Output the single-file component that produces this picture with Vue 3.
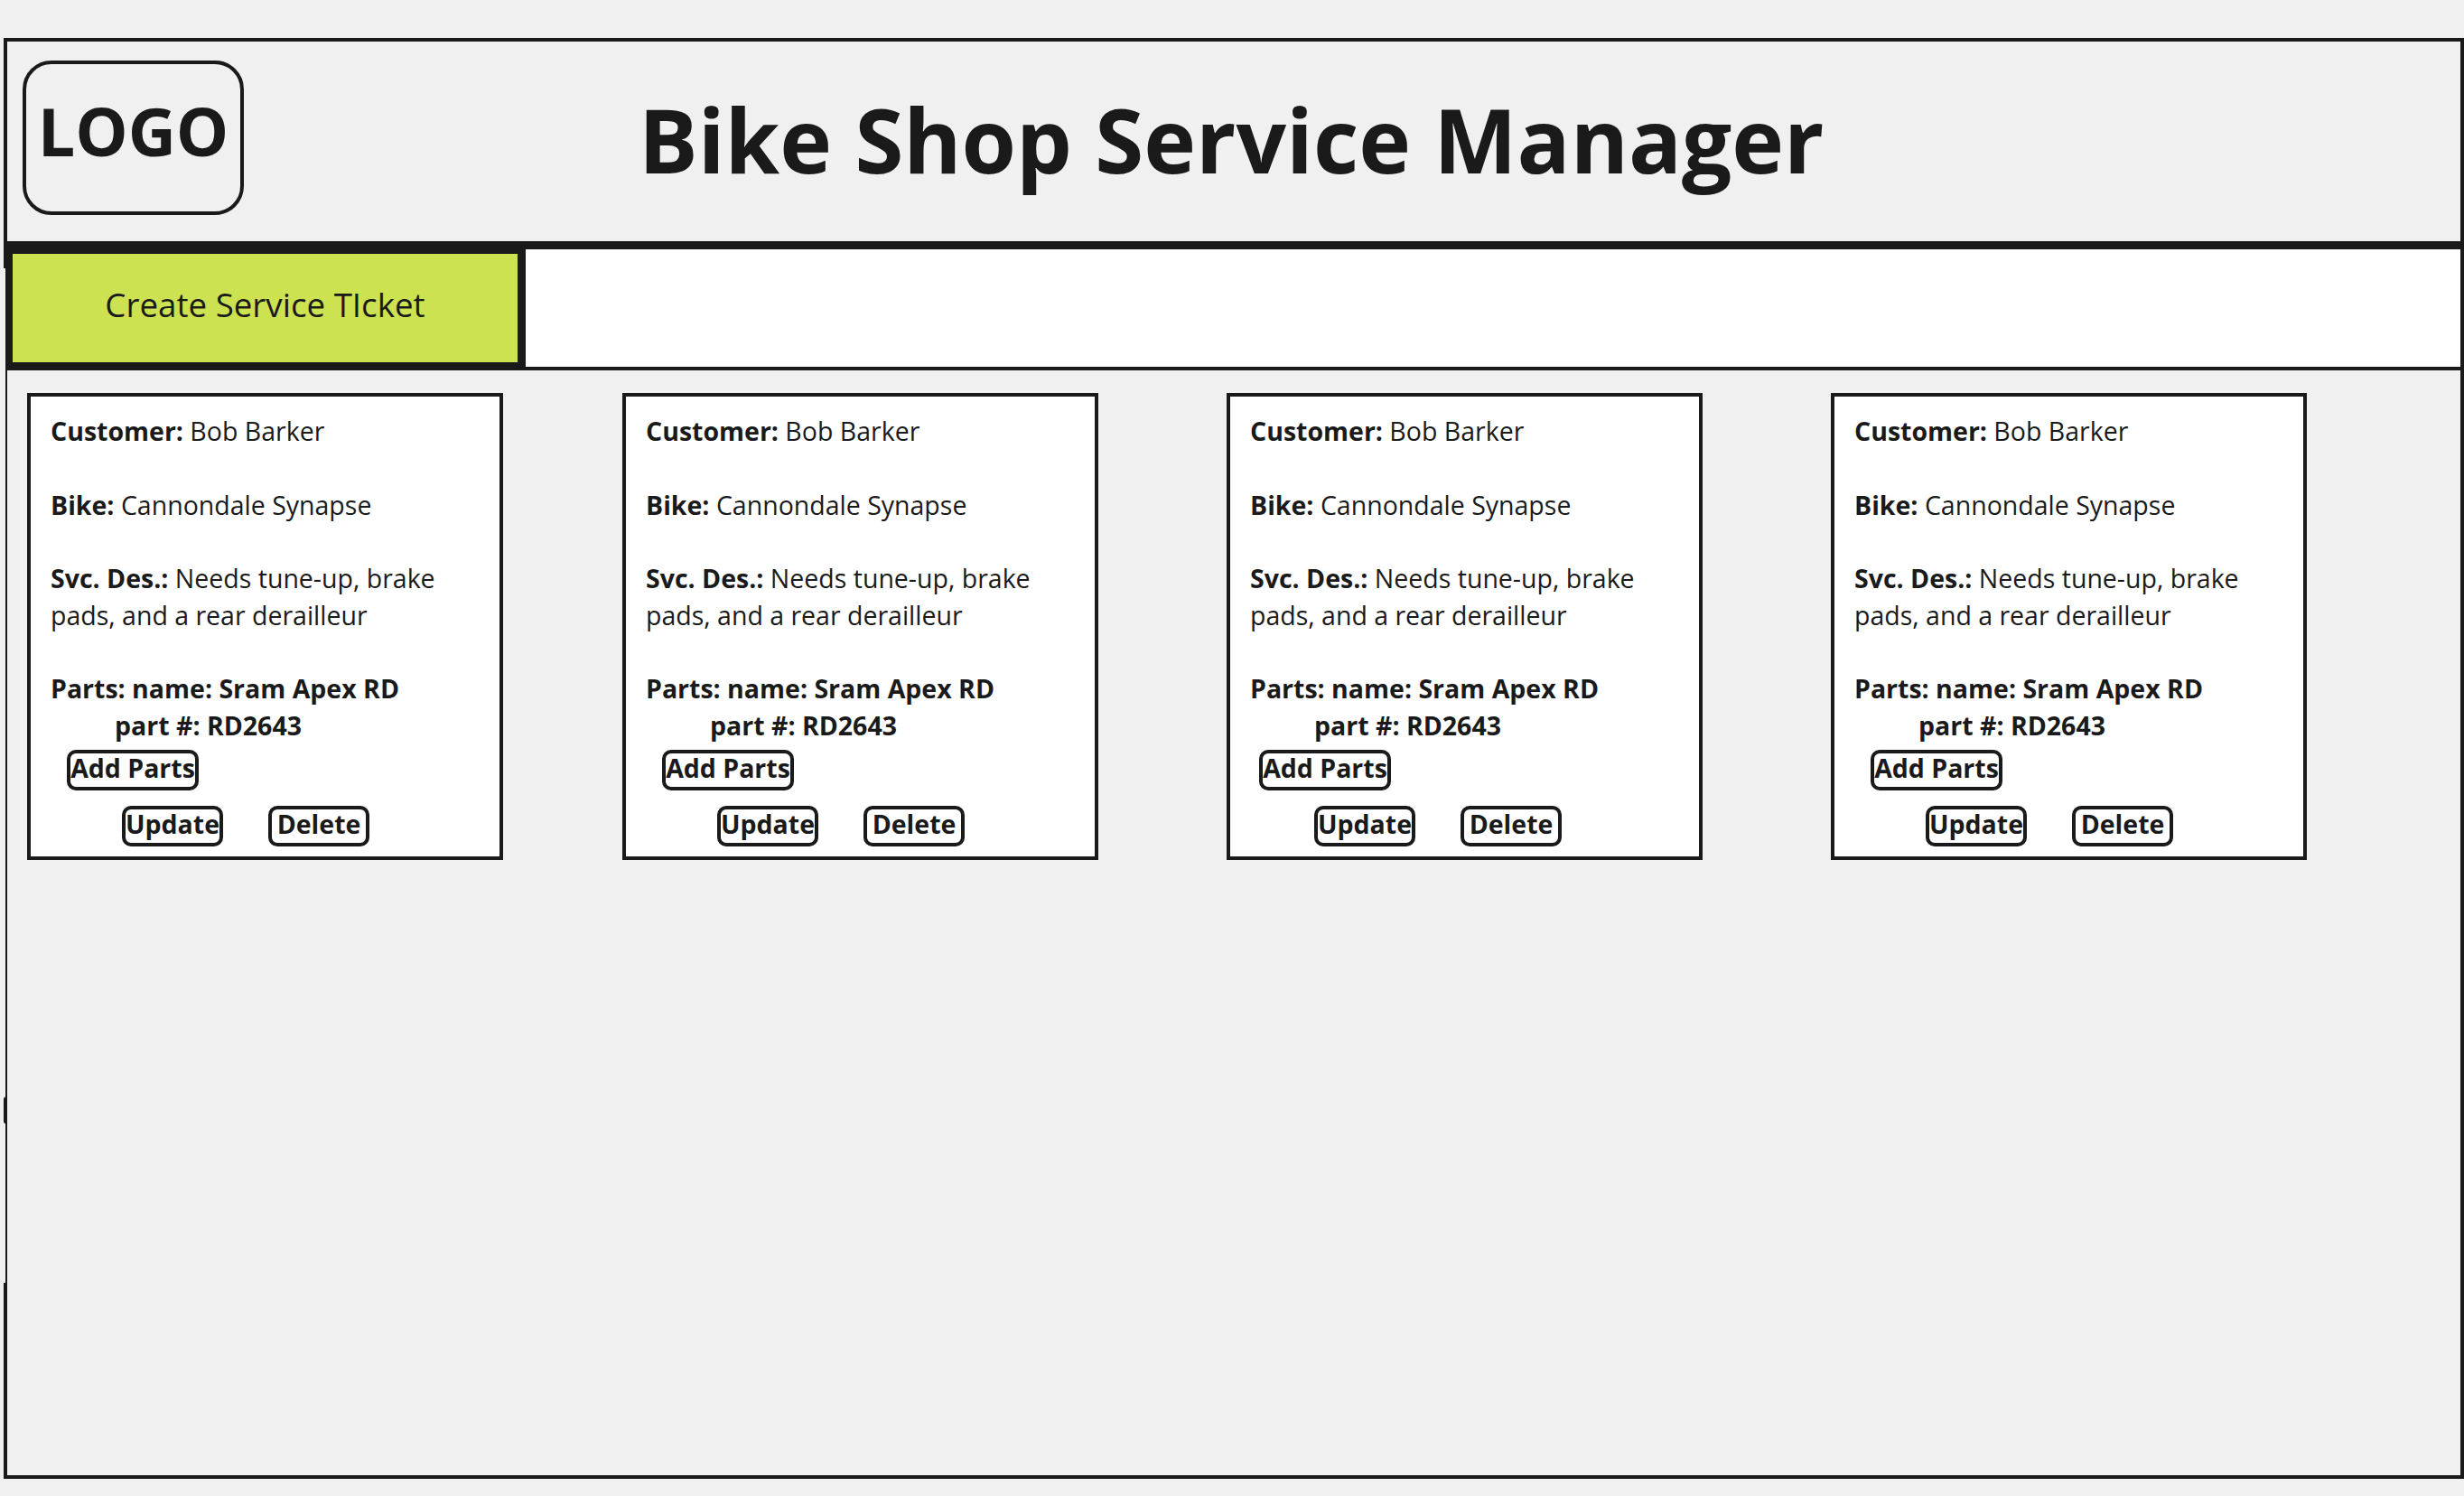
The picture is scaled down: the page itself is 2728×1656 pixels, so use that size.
<script setup>
const tickets = [1, 2, 3, 4].map((id) => ({
  id,
  customer: 'Bob Barker',
  bike: 'Cannondale Synapse',
  description: 'Needs tune-up, brake pads, and a rear derailleur',
  partName: 'Sram Apex RD',
  partNumber: 'RD2643',
}));
</script>

<template>
  <div class="page">
    <div class="frame">
      <span class="edge-gap"></span>
      <span class="edge-blob"></span>

      <header class="header">
        <div class="logo">LOGO</div>
        <h1>Bike Shop Service Manager</h1>
      </header>

      <nav class="nav">
        <button class="create">Create Service TIcket</button>
      </nav>

      <main class="tickets">
        <article v-for="t in tickets" :key="t.id" class="card">
          <p><b>Customer:</b> {{ t.customer }}</p>
          <p><b>Bike:</b> {{ t.bike }}</p>
          <p><b>Svc. Des.:</b> {{ t.description }}</p>
          <div class="parts">
            <div>Parts: name: {{ t.partName }}</div>
            <div class="part-no">part #: {{ t.partNumber }}</div>
          </div>
          <button class="btn add">Add Parts</button>
          <div class="actions">
            <button class="btn">Update</button>
            <button class="btn">Delete</button>
          </div>
        </article>
      </main>
    </div>
  </div>
</template>

<style>
html,
body {
  margin: 0;
  height: 100%;
  background: #f0f0f0;
  overflow: hidden;
}
</style>

<style scoped>
.page {
  padding: 42px 0 0 4px;
  font-family: 'Open Sans', sans-serif;
  color: #1a1a1a;
}

.frame {
  position: relative;
  box-sizing: border-box;
  width: 2724px;
  height: 1595px;
  border: 4px solid #1a1a1a;
}

/* the hand-drawn outline is thinner down part of the left side */
.edge-gap {
  position: absolute;
  left: -4px;
  top: 251px;
  width: 2px;
  height: 1123px;
  background: #f0f0f0;
  z-index: 2;
}

.edge-blob {
  position: absolute;
  left: -4px;
  top: 1168px;
  width: 3px;
  height: 30px;
  border-radius: 3px 0 0 3px;
  background: #1a1a1a;
  z-index: 3;
}

.header {
  display: flex;
  align-items: flex-start;
  height: 230px;
  box-sizing: border-box;
  padding: 21px 0 0 17px;
  border-bottom: 9px solid #1a1a1a;
}

.logo {
  box-sizing: border-box;
  width: 245px;
  height: 171px;
  padding-bottom: 16px;
  display: flex;
  align-items: center;
  justify-content: center;
  border: 4px solid #1a1a1a;
  border-radius: 32px;
  font-size: 73.5px;
  font-weight: 700;
}

h1 {
  margin: 22px 0 0 437px;
  font-size: 97.8px;
  line-height: 130px;
  font-weight: 700;
  white-space: nowrap;
}

.nav {
  display: flex;
  height: 134px;
  box-sizing: border-box;
  background: #fff;
  border-bottom: 4px solid #1a1a1a;
}

.create {
  box-sizing: border-box;
  width: 577px;
  height: 138px;
  margin: -4px 0 0 -3px;
  padding: 0 0 8px;
  border: 9px solid #1a1a1a;
  background: #cde250;
  color: #1a1a1a;
  font-family: inherit;
  font-size: 36.7px;
}

.tickets {
  display: flex;
  align-items: flex-start;
  gap: 142px;
  padding: 25px 0 0 22px;
}

.card {
  box-sizing: border-box;
  width: 527px;
  height: 517px;
  padding: 18px 22px 0;
  border: 4px solid #1a1a1a;
  background: #fff;
  font-size: 28.5px;
  line-height: 41px;
}

.card:first-child {
  margin-right: -10px;
}

.card p {
  margin: 0 0 40.5px;
}

.parts {
  margin-top: -0.5px;
  font-weight: 700;
}

.part-no {
  padding-left: 71px;
}

.btn {
  box-sizing: border-box;
  height: 45px;
  padding: 0 0 6px;
  display: inline-flex;
  align-items: center;
  justify-content: center;
  border: 4px solid #1a1a1a;
  border-radius: 10px;
  background: #fff;
  color: #1a1a1a;
  font-family: inherit;
  font-size: 28.5px;
  font-weight: 700;
  white-space: nowrap;
}

.add {
  display: flex;
  width: 146px;
  margin: 6px 0 0 18px;
}

.actions {
  display: flex;
  gap: 50px;
  margin: 17px 0 0 79px;
}

.actions .btn {
  width: 112px;
}

.card:nth-child(3) .add {
  margin-left: 10px;
}

.card:nth-child(3) .actions {
  margin-left: 71px;
}
</style>
